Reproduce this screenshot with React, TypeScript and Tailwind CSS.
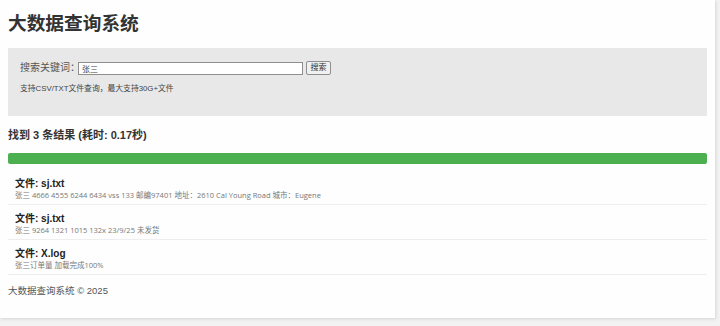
const results = [
  {
    file: "sj.txt",
    text: "张三 4666 4555 6244 6434 vss 133 邮编97401 地址：2610 Cal Young Road 城市：Eugene",
  },
  { file: "sj.txt", text: "张三 9264 1321 1015 132x 23/9/25 未发货" },
  { file: "X.log", text: "张三订单量 加载完成100%" },
];

const sans = "font-['Liberation_Sans','Noto_Sans_CJK_SC',sans-serif]";

export default function App() {
  return (
    <div className={`min-h-[326px] w-[720px] bg-[#f2f2f2] ${sans}`}>
      <div className="flex h-[318px] w-[715px] flex-col bg-[#fefefe] px-2 pt-[11px] shadow-[1px_1px_3px_rgba(0,0,0,0.12)]">
        <h1 className="text-[18.7px] font-bold leading-[25px] text-[#333]">
          大数据查询系统
        </h1>

        <div className="mt-[12px] h-[68px] bg-[#e8e8e8] px-3 pt-[13px]">
          <div className="flex h-[14px] items-center">
            <span className="text-[10px] leading-[14px] text-[#555]">
              搜索关键词：
            </span>
            <input
              defaultValue="张三"
              className="ml-[-2px] h-[13px] w-[225px] border border-[#8f8f8f] bg-white px-[3px] text-[8px] leading-[11px] text-[#444] outline-none"
            />
            <button className="ml-[3px] h-[14px] w-[25px] rounded-[2px] border border-[#8f8f8f] bg-[#f0f0f0] text-[8px] leading-[12px] text-[#333]">
              搜索
            </button>
          </div>
          <p className="mt-[8px] text-[7.8px] leading-[12px] text-[#444]">
            支持CSV/TXT文件查询，最大支持30G+文件
          </p>
        </div>

        <h2 className="mt-[11px] text-[11px] font-bold leading-[16px] text-[#333]">
          找到 3 条结果 (耗时: 0.17秒)
        </h2>

        <div className="mt-[10px] h-[11px] rounded-[2px] bg-[#4caf50]" />

        <div className="mt-[6px]">
          {results.map((r, i) => (
            <div key={i} className="border-b border-[#eeeeee] px-[7px] pb-[3px] pt-[7px]">
              <div className="text-[10px] font-bold leading-[13px] text-[#222]">
                文件: {r.file}
              </div>
              <div className="font-['Open_Sans','Noto_Sans_CJK_SC',sans-serif] text-[7.5px] leading-[11px] text-[#777]">
                {r.text}
              </div>
            </div>
          ))}
        </div>

        <footer className="mt-[8px] text-[9.5px] leading-[16px] text-[#555]">
          大数据查询系统 © 2025
        </footer>
      </div>
    </div>
  );
}
